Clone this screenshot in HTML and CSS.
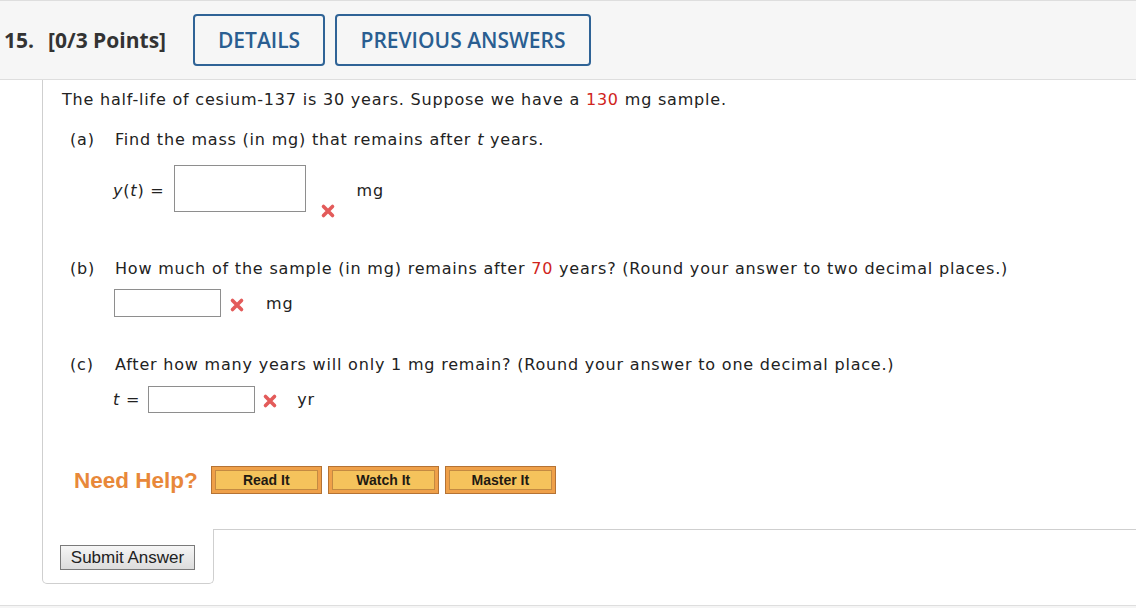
FILE: index.html
```html
<!DOCTYPE html>
<html lang="en">
<head>
<meta charset="utf-8">
<title>Question 15</title>
<link rel="stylesheet" href="styles.css">
</head>
<body>
<header class="qhead">
  <span class="qnum">15.</span>
  <span class="qpoints">[0/3 Points]</span>
  <button class="hbtn hbtn-details">DETAILS</button>
  <button class="hbtn hbtn-prev">PREVIOUS ANSWERS</button>
</header>

<section class="question">
  <div class="qbody">
    <p class="intro">The half-life of cesium-137 is 30 years. Suppose we have a <span class="red">130</span> mg sample.</p>

    <div class="part part-a">
      <div class="part-line"><span class="plabel">(a)</span><span>Find the mass (in mg) that remains after <i>t</i> years.</span></div>
      <div class="ans ans-a">
        <span class="alabel"><i>y</i>(<i>t</i>) =</span>
        <span class="box box-a"></span>
        <svg class="xicon xicon-a" viewBox="0 0 16 16" width="16" height="16"><path d="M3.5 3.5 L12.5 12.5 M12.5 3.5 L3.5 12.5" stroke="#e35b5a" stroke-width="3.6" stroke-linecap="round" fill="none"/></svg>
        <span class="unit unit-a">mg</span>
      </div>
    </div>

    <div class="part part-b">
      <div class="part-line"><span class="plabel">(b)</span><span>How much of the sample (in mg) remains after <span class="red">70</span> years? (Round your answer to two decimal places.)</span></div>
      <div class="ans ans-b">
        <span class="box box-b"></span>
        <svg class="xicon xicon-b" viewBox="0 0 16 16" width="16" height="16"><path d="M3.5 3.5 L12.5 12.5 M12.5 3.5 L3.5 12.5" stroke="#e35b5a" stroke-width="3.6" stroke-linecap="round" fill="none"/></svg>
        <span class="unit unit-b">mg</span>
      </div>
    </div>

    <div class="part part-c">
      <div class="part-line"><span class="plabel">(c)</span><span>After how many years will only 1 mg remain? (Round your answer to one decimal place.)</span></div>
      <div class="ans ans-c">
        <span class="alabel"><i>t</i> =</span>
        <span class="box box-c"></span>
        <svg class="xicon xicon-c" viewBox="0 0 16 16" width="16" height="16"><path d="M3.5 3.5 L12.5 12.5 M12.5 3.5 L3.5 12.5" stroke="#e35b5a" stroke-width="3.6" stroke-linecap="round" fill="none"/></svg>
        <span class="unit unit-c">yr</span>
      </div>
    </div>

    <div class="help">
      <span class="help-title">Need Help?</span>
      <button class="hb">Read It</button>
      <button class="hb">Watch It</button>
      <button class="hb">Master It</button>
    </div>
  </div>

  <div class="qfoot">
    <div class="submit-cell"><button class="submit">Submit Answer</button></div>
    <div class="filler"></div>
  </div>
</section>

<div class="bottom-band"></div>
</body>
</html>
```

FILE: styles.css
```css
* { box-sizing: border-box; }
html, body { margin: 0; padding: 0; background: #fff; }
body { width: 1136px; height: 608px; overflow: hidden; }

.qhead {
  display: flex;
  align-items: center;
  height: 80px;
  background: #f6f6f6;
  border-top: 1px solid #dedede;
  border-bottom: 1px solid #dedede;
  padding-left: 4px;
  font-family: "Open Sans", "Liberation Sans", sans-serif;
  color: #333;
}
.qnum { font-size: 21px; font-weight: 700; }
.qpoints { font-size: 21px; font-weight: 700; margin-left: 14px; }
.hbtn {
  font-family: "Open Sans", "Liberation Sans", sans-serif;
  font-size: 21px;
  font-weight: 600;
  color: #2a5e91;
  background: transparent;
  border: 2px solid #2f6396;
  border-radius: 4px;
  height: 52px;
  padding: 0;
  margin: 0;
}
.hbtn-details { width: 132px; margin-left: 27px; }
.hbtn-prev { width: 256px; margin-left: 10px; }

.question { margin-left: 42px; }
.qbody {
  border-left: 1px solid #cfcfcf;
  padding: 10px 0 35px 19px;
  font-family: "DejaVu Sans", Verdana, sans-serif;
  font-size: 16px;
  line-height: 19px;
  letter-spacing: 0.8px;
  color: #222;
}
.intro { margin: 0; }
.red { color: #d0241c; }

.part-line { display: flex; padding-left: 8px; }
.plabel { width: 45px; flex: none; }
.part-a { margin-top: 21px; }
.part-b { margin-top: 40px; }
.part-c { margin-top: 38px; }

.ans { display: flex; align-items: flex-start; padding-left: 51px; }
.alabel { flex: none; }
.box { display: block; background: #fff; border: 1px solid #8e8e8e; flex: none; }
.xicon { flex: none; display: block; }
.unit { flex: none; }

.ans-a { margin-top: 16px; }
.ans-a .alabel { margin-top: 16px; }
.box-a { width: 132px; height: 47px; margin-left: 9px; }
.xicon-a { margin-left: 14px; margin-top: 38px; }
.unit-a { margin-left: 21px; margin-top: 16px; }

.ans-b { margin-top: 11px; padding-left: 52px; }
.box-b { width: 107px; height: 28px; }
.xicon-b { margin-left: 8px; margin-top: 8px; }
.unit-b { margin-left: 21px; margin-top: 5px; }

.ans-c { margin-top: 12px; }
.ans-c .alabel { margin-top: 4px; }
.box-c { width: 107px; height: 27px; margin-left: 8px; }
.xicon-c { margin-left: 7px; margin-top: 7px; }
.unit-c { margin-left: 19px; margin-top: 4px; }

.help {
  display: flex;
  align-items: center;
  margin-top: 53px;
  padding-left: 12px;
  letter-spacing: 0;
}
.help-title {
  font-family: "Liberation Sans", Arial, sans-serif;
  font-weight: 700;
  font-size: 22.5px;
  color: #e8883a;
  margin-right: 13px;
}
.hb {
  font-family: "Liberation Sans", Arial, sans-serif;
  font-weight: 700;
  font-size: 14px;
  color: #1e1a12;
  width: 111px;
  height: 28px;
  padding: 0;
  margin: 0 6px 0 0;
  background: #f5c35c;
  border: 1px solid #b57334;
  box-shadow: inset 0 0 0 3px #efa049, inset 0 0 0 4px #c48a42;
}

.qfoot { display: flex; }
.submit-cell {
  width: 172px;
  height: 55px;
  border: 1px solid #cfcfcf;
  border-top: none;
  border-radius: 0 0 5px 5px;
  padding: 16px 0 0 17px;
}
.filler { flex: 1; border-top: 1px solid #cfcfcf; }
.submit {
  font-family: "Liberation Sans", Arial, sans-serif;
  font-size: 17px;
  color: #222;
  width: 135px;
  height: 25px;
  padding: 0;
  margin: 0;
  background: linear-gradient(#f6f6f6, #dcdcdc);
  border: 1px solid #7a7a7a;
  border-radius: 0;
}

.bottom-band {
  margin-top: 21px;
  height: 10px;
  background: #f5f5f5;
  border-top: 1px solid #dedede;
}
```
